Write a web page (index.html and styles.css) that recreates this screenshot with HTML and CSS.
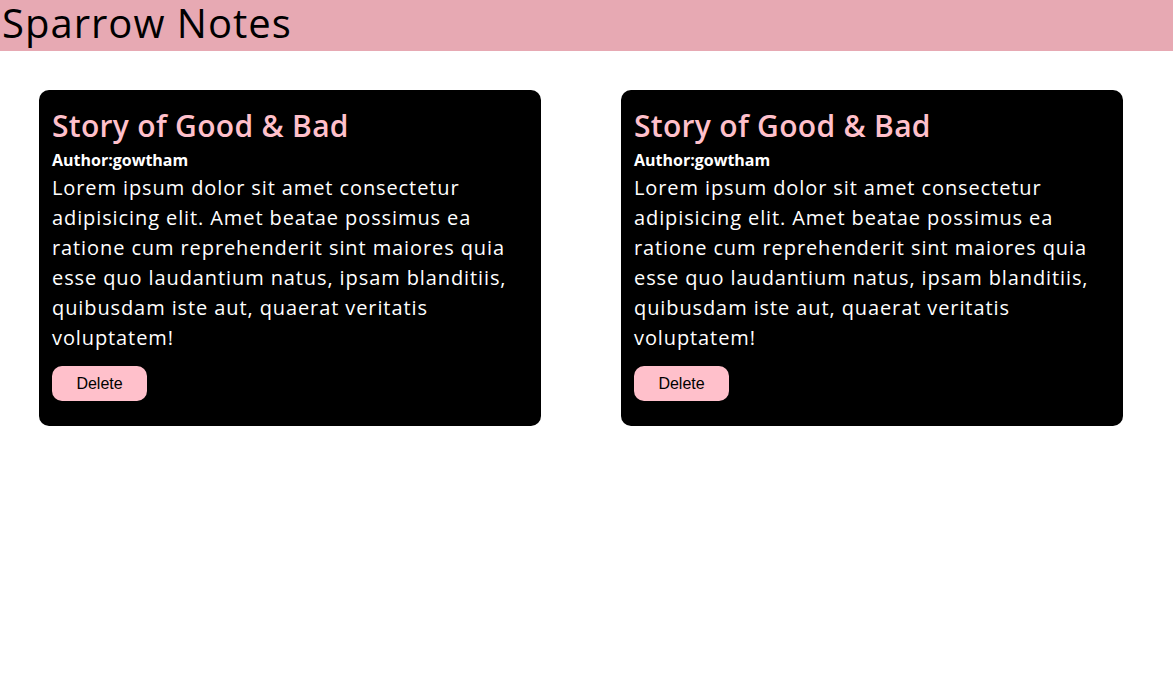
FILE: index.html
```html
<!DOCTYPE html>
<html>
<head>
<meta charset="utf-8">
<link rel="stylesheet" href="styles.css">
</head>
<body>
<header class="topbar"><h1 class="brand">Sparrow Notes</h1></header>
<main class="notes">
  <article class="note">
    <h2 class="note-title">Story of Good &amp; Bad</h2>
    <p class="note-author">Author:gowtham</p>
    <p class="note-body">Lorem ipsum dolor sit amet consectetur adipisicing elit. Amet beatae possimus ea ratione cum reprehenderit sint maiores quia esse quo laudantium natus, ipsam blanditiis, quibusdam iste aut, quaerat veritatis voluptatem!</p>
    <button class="delete-btn">Delete</button>
  </article>
  <article class="note">
    <h2 class="note-title">Story of Good &amp; Bad</h2>
    <p class="note-author">Author:gowtham</p>
    <p class="note-body">Lorem ipsum dolor sit amet consectetur adipisicing elit. Amet beatae possimus ea ratione cum reprehenderit sint maiores quia esse quo laudantium natus, ipsam blanditiis, quibusdam iste aut, quaerat veritatis voluptatem!</p>
    <button class="delete-btn">Delete</button>
  </article>
</main>
</body>
</html>
```
FILE: styles.css
```css
* { box-sizing: border-box; }
body {
  margin: 0;
  font-family: "Open Sans", "DejaVu Sans", sans-serif;
  background: #fff;
}
.topbar {
  background: #e7a9b3;
  height: 51px;
  padding: 0 2px;
}
.brand {
  margin: 0;
  font-size: 40px;
  font-weight: 500;
  line-height: 46px;
  letter-spacing: 1px;
  color: #000;
}
.notes {
  display: flex;
  gap: 80px;
  padding: 39px 0 0 39px;
}
.note {
  width: 502px;
  height: 336px;
  background: #000;
  border-radius: 10px;
  padding: 13px 13px;
}
.note-title {
  margin: 0;
  font-size: 30px;
  font-weight: 600;
  line-height: 45px;
  letter-spacing: 0.3px;
  color: #ffc0cb;
}
.note-author {
  margin: 0;
  font-size: 16px;
  font-weight: 700;
  line-height: 25px;
  color: #fff;
}
.note-body {
  margin: 0;
  font-size: 20px;
  font-weight: 500;
  line-height: 30px;
  letter-spacing: 0.9px;
  color: #fff;
}
.delete-btn {
  margin-top: 13px;
  width: 95px;
  height: 35px;
  border: none;
  border-radius: 10px;
  background: #ffc0cb;
  color: #000;
  font-family: "Liberation Sans", Arial, sans-serif;
  font-size: 16px;
}
```
